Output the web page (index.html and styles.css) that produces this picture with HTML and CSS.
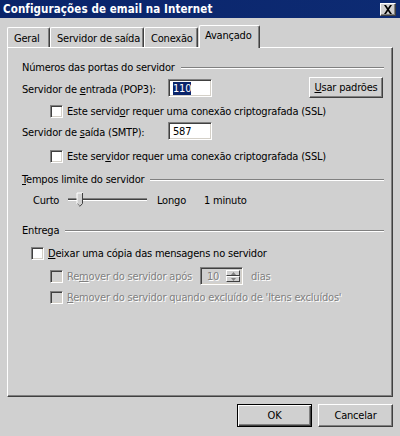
FILE: index.html
```html
<!DOCTYPE html>
<html lang="pt">
<head>
<meta charset="utf-8">
<title>Configurações de email na Internet</title>
<link rel="stylesheet" href="styles.css">
</head>
<body>
<div class="window">
  <div class="titlebar">
    <span class="title">Configurações de email na Internet</span>
    <span class="close-btn">
      <svg width="10" height="9" viewBox="0 0 10 9"><path d="M1 0h2l2 3 2-3h2L6 4.5 9 9H7L5 6 3 9H1l3-4.5z" fill="#000"/></svg>
    </span>
  </div>

  <div class="tabs">
    <div class="tab tab-geral">Geral</div>
    <div class="tab tab-saida">Servidor de saída</div>
    <div class="tab tab-conexao">Conexão</div>
    <div class="tab tab-active">Avançado</div>
  </div>

  <div class="panel">
    <div class="group">
      <span>Números das portas do servidor</span><span class="rule"></span>
    </div>

    <div class="row row-pop">
      <span class="field-label">Servidor de <u>e</u>ntrada (POP3):</span>
      <span class="textbox"><span class="sel">110</span></span>
      <span class="button btn-defaults"><u>U</u>sar padrões</span>
    </div>

    <div class="row row-chk1 indent">
      <span class="checkbox"></span>
      <span class="chk-text">Este servid<u>o</u>r requer uma conexão criptografada (SSL)</span>
    </div>

    <div class="row row-smtp">
      <span class="field-label">Servidor de <u>s</u>aída (SMTP):</span>
      <span class="textbox">587</span>
    </div>

    <div class="row row-chk2 indent">
      <span class="checkbox"></span>
      <span class="chk-text">Este ser<u>v</u>idor requer uma conexão criptografada (SSL)</span>
    </div>

    <div class="group group-timeout">
      <span><u>T</u>empos limite do servidor</span><span class="rule"></span>
    </div>

    <div class="row row-slider">
      <span class="slider-short">Curto</span>
      <svg class="slider" width="80" height="20" viewBox="0 0 80 20">
        <rect x="0" y="8" width="79" height="1" fill="#808080"/>
        <rect x="0" y="9" width="79" height="1" fill="#404040"/>
        <rect x="0" y="10" width="79" height="1" fill="#ffffff"/>
        <path d="M9 3.5h5.5v10l-2.75 3-2.75-3z" fill="#d0d0d0"/>
        <path d="M9 14V3h6" fill="none" stroke="#ffffff" stroke-width="1"/>
        <path d="M14.5 3v10.5l-2.75 3" fill="none" stroke="#404040" stroke-width="1"/>
        <path d="M9.5 13.5l2.25 2.5" fill="none" stroke="#808080" stroke-width="1"/>
      </svg>
      <span class="slider-long">Longo</span>
      <span class="slider-value">1 minuto</span>
    </div>

    <div class="group group-delivery">
      <span>Entrega</span><span class="rule"></span>
    </div>

    <div class="row row-leave">
      <span class="checkbox"></span>
      <span class="chk-text"><u>D</u>eixar uma cópia das mensagens no servidor</span>
    </div>

    <div class="row row-remove1 indent disabled">
      <span class="checkbox"></span>
      <span class="chk-text remove-label">Re<u>m</u>over do servidor após</span>
      <span class="spinner">
        <span class="spin-value">10</span>
        <span class="spin-buttons">
          <span class="spin-btn"><svg width="5" height="3" viewBox="0 0 5 3"><path d="M2.5 0L5 3H0z" fill="#808080"/></svg></span>
          <span class="spin-btn"><svg width="5" height="3" viewBox="0 0 5 3"><path d="M0 0h5L2.5 3z" fill="#808080"/></svg></span>
        </span>
      </span>
      <span class="days">dias</span>
    </div>

    <div class="row row-remove2 indent disabled">
      <span class="checkbox"></span>
      <span class="chk-text"><u>R</u>emover do servidor quando excluído de 'Itens excluídos'</span>
    </div>
  </div>

  <div class="footer">
    <span class="button btn-ok">OK</span>
    <span class="button btn-cancel">Cancelar</span>
  </div>
</div>
</body>
</html>
```

FILE: styles.css
```css
html, body {
  margin: 0;
  padding: 0;
  background: #d0d0d0;
}

body {
  font-family: "DejaVu Sans Condensed", "DejaVu Sans", sans-serif;
  font-size: 11px;
  letter-spacing: -0.2px;
  color: #000;
}

u {
  text-decoration: underline;
  text-underline-offset: 1px;
}

.window {
  width: 400px;
  height: 436px;
  display: flex;
  flex-direction: column;
  background: #d0d0d0;
  overflow: hidden;
}

/* title bar */
.titlebar {
  height: 18px;
  flex: none;
  background: linear-gradient(to right, #0a246a, #0d2b73);
  display: flex;
  align-items: center;
  justify-content: space-between;
  padding: 0 4px 0 3px;
}

.title {
  color: #fff;
  font-weight: bold;
  font-size: 11.5px;
  letter-spacing: 0.1px;
  white-space: nowrap;
}

.close-btn {
  width: 16px;
  height: 13px;
  box-sizing: border-box;
  background: #d0d0d0;
  border-top: 1px solid #fff;
  border-left: 1px solid #fff;
  border-right: 1px solid #404040;
  border-bottom: 1px solid #404040;
  box-shadow: inset -1px -1px #808080;
  display: flex;
  align-items: center;
  justify-content: center;
  margin-top: 1px;
}

.close-btn svg {
  display: block;
}

/* tabs */
.tabs {
  height: 22px;
  flex: none;
  margin-top: 8px;
  padding-left: 7px;
  display: flex;
  align-items: flex-end;
  position: relative;
  z-index: 1;
  margin-bottom: -1px;
}

.tab {
  height: 20px;
  box-sizing: border-box;
  padding: 0 6px;
  margin-bottom: 1px;
  border-top: 1px solid #fff;
  border-left: 1px solid #fff;
  border-right: 1px solid #404040;
  border-radius: 2px 2px 0 0;
  box-shadow: inset -1px 0 #808080;
  background: #d0d0d0;
  display: flex;
  align-items: center;
  padding-top: 1px;
  white-space: nowrap;
  flex: none;
}

.tab-geral { width: 43px; }
.tab-saida { width: 94px; }
.tab-conexao { width: 54px; }

.tab-active {
  height: 23px;
  width: 61px;
  margin-bottom: 0;
  margin-left: 1px;
  padding-top: 0;
  padding-bottom: 3px;
  padding-left: 5px;
}

/* panel */
.panel {
  flex: none;
  height: 350px;
  box-sizing: border-box;
  margin: 0 7px;
  border-top: 1px solid #fff;
  border-left: 1px solid #fff;
  border-right: 1px solid #404040;
  border-bottom: 1px solid #404040;
  box-shadow: inset -1px -1px #808080;
  padding: 12px 8px 0 14px;
  display: flex;
  flex-direction: column;
  white-space: nowrap;
}

.group {
  height: 14px;
  display: flex;
  align-items: center;
}

.rule {
  flex: 1;
  height: 0;
  border-top: 1px solid #808080;
  border-bottom: 1px solid #fff;
  margin-left: 6px;
  margin-top: 1px;
}

.row {
  display: flex;
  align-items: center;
  height: 20px;
}

.indent {
  padding-left: 28px;
}

.row-pop { height: 22px; margin-top: 3px; }
.row-chk1 { margin-top: 2px; }
.row-smtp { margin-top: 0; }
.row-chk2 { margin-top: 5px; }
.group-timeout { margin-top: 6px; }
.row-slider { margin-top: 4px; }
.group-delivery { margin-top: 13px; }
.row-leave { margin-top: 6px; padding-left: 9px; }
.row-remove1 { margin-top: 3px; }
.row-remove2 { margin-top: 1px; }

.field-label {
  width: 146px;
  flex: none;
  padding-top: 2px;
}

.textbox {
  width: 44px;
  height: 18px;
  box-sizing: border-box;
  background: #fff;
  border-top: 1px solid #808080;
  border-left: 1px solid #808080;
  border-right: 1px solid #fff;
  border-bottom: 1px solid #fff;
  box-shadow: inset 1px 1px #404040, inset -1px -1px #d4d0c8;
  padding-left: 4px;
  display: flex;
  align-items: center;
}

.sel {
  background: #0a246a;
  color: #fff;
  line-height: 13px;
}

.button {
  box-sizing: border-box;
  background: #d0d0d0;
  border-top: 1px solid #fff;
  border-left: 1px solid #fff;
  border-right: 1px solid #404040;
  border-bottom: 1px solid #404040;
  box-shadow: inset -1px -1px #808080;
  display: flex;
  align-items: center;
  justify-content: center;
}

.btn-defaults {
  width: 74px;
  height: 21px;
  margin-left: auto;
  margin-right: 1px;
  margin-top: -2px;
}

.checkbox {
  width: 13px;
  height: 13px;
  flex: none;
  box-sizing: border-box;
  background: #fff;
  border-top: 1px solid #808080;
  border-left: 1px solid #808080;
  border-right: 1px solid #fff;
  border-bottom: 1px solid #fff;
  box-shadow: inset 1px 1px #404040, inset -1px -1px #d4d0c8;
}

.chk-text {
  margin-left: 4px;
}

/* slider */
.slider-short {
  margin-left: 11px;
  width: 27px;
}

.slider {
  display: block;
  margin-left: 8px;
}

.slider-long {
  margin-left: 9px;
  width: 47px;
}

/* disabled */
.disabled .chk-text,
.disabled .days,
.disabled .spin-value {
  color: #808080;
  text-shadow: 1px 1px 0 #fff;
}

.disabled .checkbox {
  background: #d0d0d0;
}

.remove-label {
  width: 133px;
  flex: none;
}

.spinner {
  width: 43px;
  height: 18px;
  box-sizing: border-box;
  border-top: 1px solid #808080;
  border-left: 1px solid #808080;
  border-right: 1px solid #fff;
  border-bottom: 1px solid #fff;
  box-shadow: inset 1px 1px #404040, inset -1px -1px #d4d0c8;
  display: flex;
  align-items: stretch;
  padding: 2px;
}

.spin-value {
  flex: 1;
  padding-left: 4px;
  display: flex;
  align-items: center;
}

.spin-buttons {
  width: 14px;
  display: flex;
  flex-direction: column;
}

.spin-btn {
  flex: 1;
  box-sizing: border-box;
  border-top: 1px solid #fff;
  border-left: 1px solid #fff;
  border-right: 1px solid #404040;
  border-bottom: 1px solid #404040;
  display: flex;
  align-items: center;
  justify-content: center;
}

.spin-btn svg {
  display: block;
}

.days {
  margin-left: 8px;
}

/* footer */
.footer {
  flex: none;
  display: flex;
  justify-content: flex-end;
  gap: 6px;
  margin-top: 7px;
  padding-right: 7px;
}

.btn-ok,
.btn-cancel {
  width: 75px;
  height: 23px;
}

.btn-ok {
  border: 1px solid #000;
  box-shadow: inset 1px 1px #fff, inset -1px -1px #404040, inset -2px -2px #808080;
}
```
